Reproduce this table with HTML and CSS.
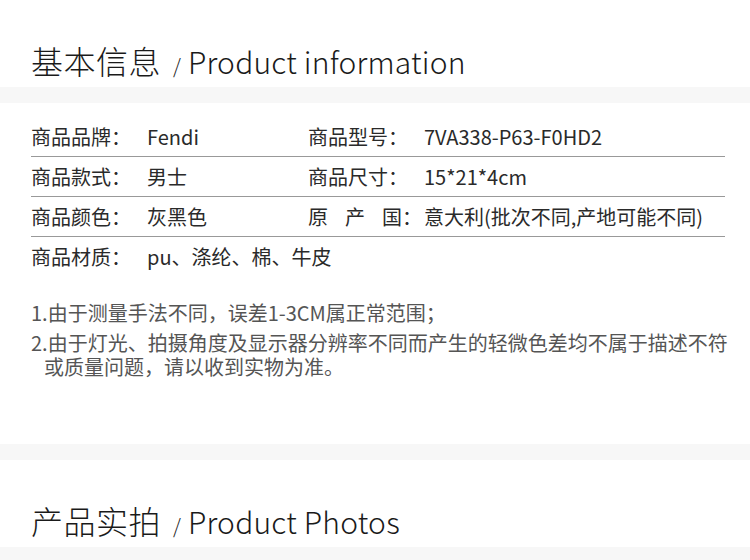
FILE: index.html
```html
<!DOCTYPE html>
<html lang="zh-CN">
<head>
<meta charset="utf-8">
<link rel="stylesheet" href="styles.css">
</head>
<body>
<div class="page">
  <h2 class="sec-title"><span class="zh">基本信息</span><span class="slash">/</span><span class="en">Product information</span></h2>
  <div class="band"></div>
  <div class="table">
    <div class="row">
      <div class="cell"><span class="label">商品品牌：</span><span class="val">Fendi</span></div>
      <div class="cell"><span class="label">商品型号：</span><span class="val">7VA338-P63-F0HD2</span></div>
    </div>
    <div class="row">
      <div class="cell"><span class="label">商品款式：</span><span class="val">男士</span></div>
      <div class="cell"><span class="label">商品尺寸：</span><span class="val">15*21*4cm</span></div>
    </div>
    <div class="row">
      <div class="cell"><span class="label">商品颜色：</span><span class="val">灰黑色</span></div>
      <div class="cell"><span class="label"><span class="sp">原</span><span class="sp">产</span>国：</span><span class="val">意大利(批次不同,产地可能不同)</span></div>
    </div>
    <div class="row last">
      <div class="cell"><span class="label">商品材质：</span><span class="val">pu、涤纶、棉、牛皮</span></div>
    </div>
  </div>
  <div class="notes">
    <p>1.由于测量手法不同，误差1-3CM属正常范围；</p>
    <p>2.由于灯光、拍摄角度及显示器分辨率不同而产生的轻微色差均不属于描述不符或质量问题，请以收到实物为准。</p>
  </div>
  <div class="band"></div>
  <h2 class="sec-title"><span class="zh">产品实拍</span><span class="slash">/</span><span class="en">Product Photos</span></h2>
  <div class="band tall"></div>
</div>
</body>
</html>
```

FILE: styles.css
```css
html, body {
  margin: 0;
  padding: 0;
  background: #fff;
}
.page {
  width: 750px;
  font-family: "Noto Sans CJK SC", "Noto Sans", sans-serif;
  color: #333;
}
.sec-title {
  margin: 0;
  height: 87px;
  box-sizing: border-box;
  padding: 40px 0 0 31px;
  font-weight: 300;
  line-height: 40px;
  color: #1a1a1a;
  display: flex;
  align-items: baseline;
  white-space: nowrap;
}
.sec-title .zh {
  font-size: 32px;
  letter-spacing: 0.5px;
}
.sec-title .slash {
  font-size: 20px;
  margin: 0 7px 0 12px;
}
.sec-title .en {
  font-size: 30px;
  letter-spacing: 0.2px;
}
.band {
  height: 16px;
  background: #f7f7f7;
}
.band.tall {
  height: 20px;
}
.table {
  padding: 14px 25px 0 31px;
}
.row {
  display: grid;
  grid-template-columns: 277px 1fr;
  height: 39px;
  align-items: center;
  border-bottom: 1px solid #999;
  font-size: 20px;
  line-height: 26px;
  color: #2a2a2a;
}
.row.last {
  border-bottom: none;
}
.cell {
  display: flex;
  white-space: nowrap;
}
.label {
  width: 116px;
  flex: none;
}
.sp {
  margin-right: 17px;
}
.notes {
  padding: 25px 14px 0 31px;
  margin-bottom: 65px;
  font-size: 20px;
  line-height: 24px;
  color: #555;
}
.notes p {
  margin: 0 0 6px 0;
  padding-left: 13px;
  text-indent: -13px;
}
.notes p:last-child {
  margin-bottom: 0;
}
```
